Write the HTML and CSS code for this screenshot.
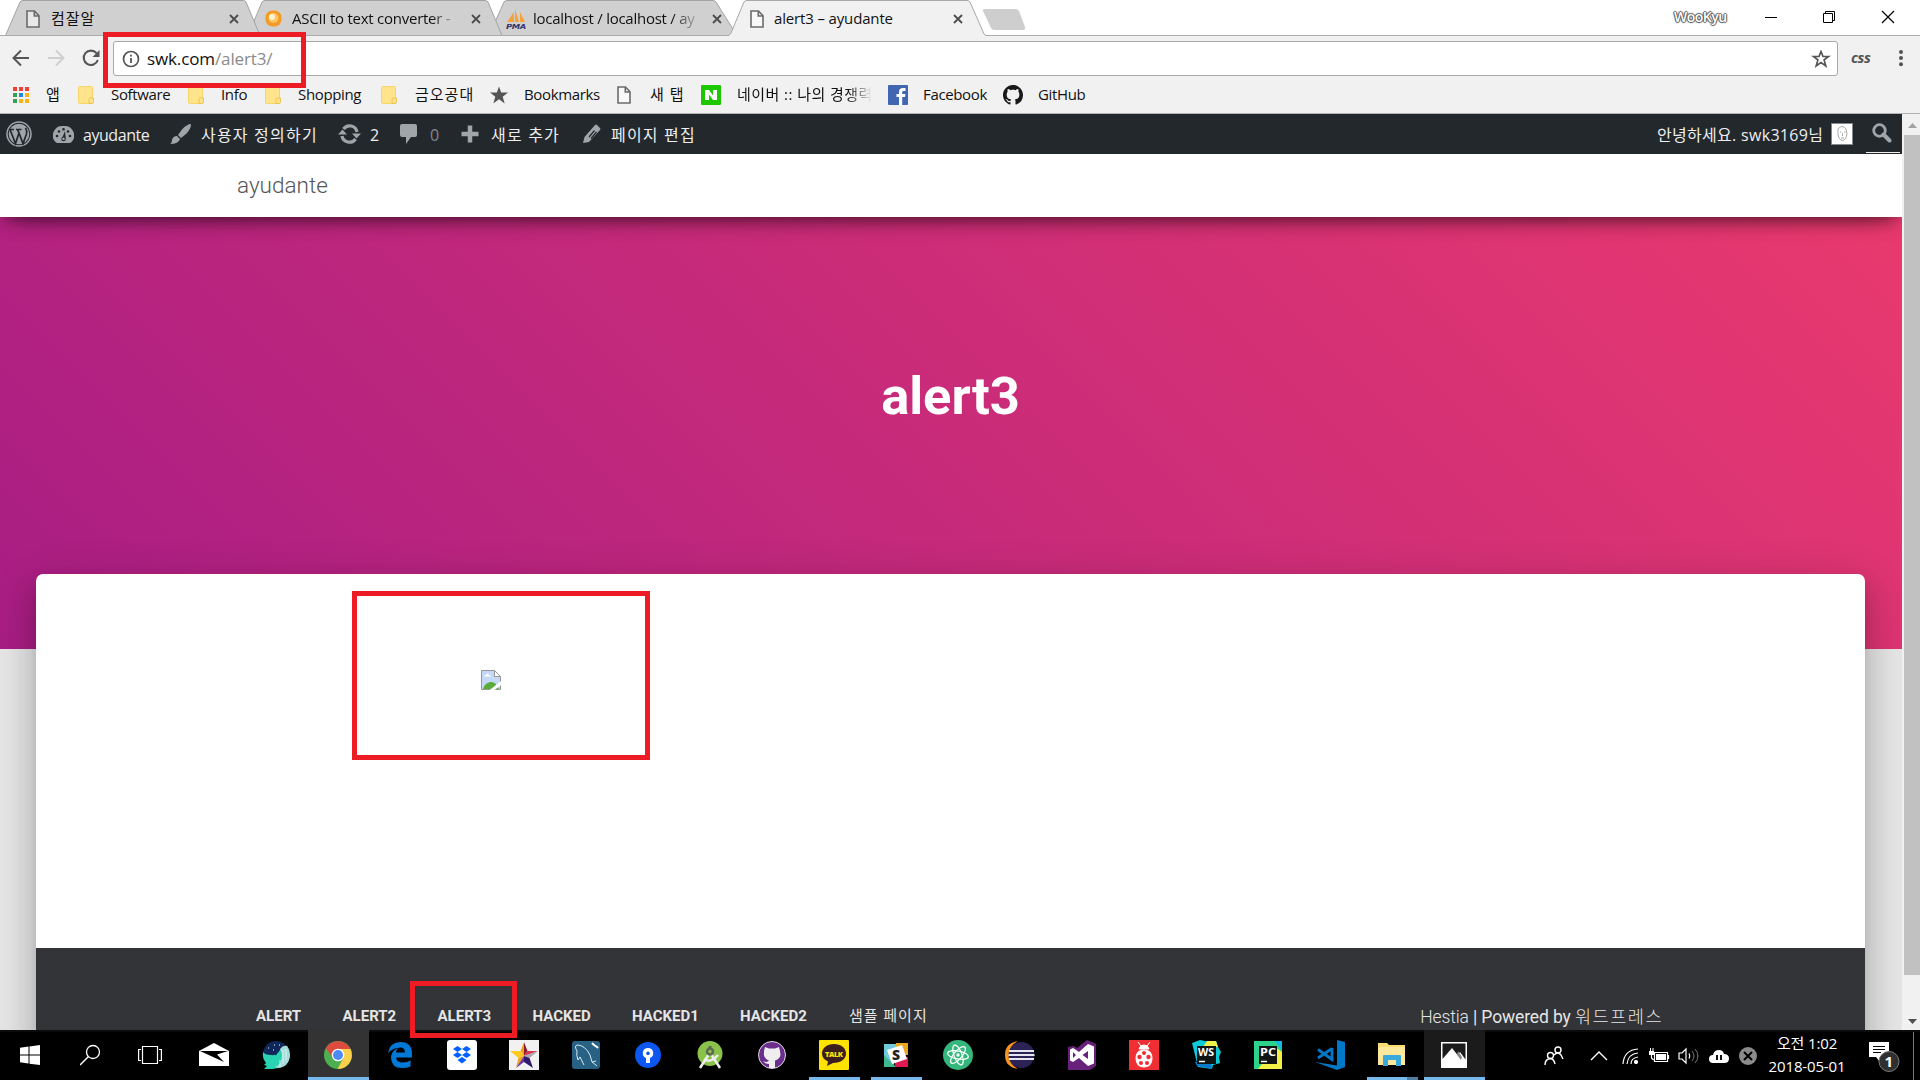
FILE: index.html
```html
<!DOCTYPE html>
<html lang="ko">
<head>
<meta charset="utf-8">
<title>alert3 – ayudante</title>
<link rel="stylesheet" href="styles.css">
</head>
<body>
<svg class="defs" width="0" height="0">
  <defs>
    <symbol id="page" viewBox="0 0 14 18"><path d="M1 1h7.500L13 5.700V17H1zM8.300 1v5H13" fill="#fff" fill-opacity=".5" stroke="#6b6b6b" stroke-width="1.600"/></symbol>
    <symbol id="close" viewBox="0 0 10 10"><path d="M1 1l8 8M9 1L1 9" stroke="#4c4c4c" stroke-width="1.800"/></symbol>
    <symbol id="folder" viewBox="0 0 16 18"><rect x=".5" y=".5" width="14" height="17" rx="1" fill="#ffe48c" stroke="#f7d56b"/><path d="M11 17.500v-4q0-1.500 1.500-1.500H15.500v4q0 1.500-1.500 1.500z" fill="#ffe48c" stroke="#e9bd40" stroke-width=".8"/></symbol>
    <symbol id="octocat" viewBox="0 0 16 16"><path fill-rule="evenodd" d="M8 0C3.580 0 0 3.580 0 8c0 3.540 2.290 6.530 5.470 7.590.4.070.55-.17.55-.38 0-.19-.01-.82-.01-1.490-2.010.37-2.530-.49-2.690-.94-.09-.23-.48-.94-.82-1.130-.28-.15-.68-.52-.01-.53.63-.01 1.080.58 1.230.82.72 1.210 1.870.87 2.330.66.07-.52.28-.87.51-1.070-1.780-.2-3.640-.89-3.640-3.950 0-.87.31-1.590.82-2.150-.08-.2-.36-1.020.08-2.120 0 0 .67-.21 2.200.82.64-.18 1.320-.27 2-.27s1.360.09 2 .27c1.530-1.040 2.200-.82 2.200-.82.44 1.100.16 1.920.08 2.120.51.56.82 1.270.82 2.150 0 3.070-1.870 3.750-3.650 3.950.29.25.54.73.54 1.480 0 1.070-.01 1.930-.01 2.200 0 .21.15.46.55.38A8.010 8.010 0 0 0 16 8c0-4.420-3.580-8-8-8z"/></symbol>
  </defs>
</svg>

<div class="screen">
  <header class="tabstrip">
    <svg class="tab-shapes" width="1920" height="36" viewBox="0 0 1920 36">
      <g fill="#d0d0d0" stroke="#a3a3a3">
        <path d="M489 35.500L504 2q1-1.500 3-1.500H713q2 0 3 1.500L737 35.500z"/>
        <path d="M248 35.500L262 2q1-1.500 3-1.500H485q2 0 3 1.500L502 35.500z"/>
        <path d="M5.500 35.500L20 2q1-1.500 3-1.500H243q2 0 3 1.500L260 35.500z"/>
      </g>
      <path d="M0 35.500H1920" stroke="#acacac"/>
      <path d="M728 36Q730 35 731 33L744 2q1-1.500 3-1.500H967q2 0 3 1.500L984 34q1 1.500 3 1.500V37H728z" fill="#f1f1f1"/>
      <path d="M728 35.500Q730 35 731 33L744 2q1-1.500 3-1.500H967q2 0 3 1.500L984 34q1 1.500 3 1.500" fill="none" stroke="#a8a8a8"/>
      <path d="M985 9h30q3 0 4 2l6 16q1 3-2 3H995q-3 0-4-2L983 11q-1-2 2-2z" fill="#cecece"/>
    </svg>
    <div class="tabs">
      <svg width="14" height="18"><use href="#page"/></svg><span class="ko">컴잘알</span><svg width="10" height="10"><use href="#close"/></svg>
      <svg width="17" height="18" viewBox="0 0 17 18"><rect x=".5" y=".5" width="16" height="16" rx="7" fill="#f49a25"/><circle cx="8.500" cy="8" r="5" fill="#ffc562"/><circle cx="7" cy="7" r="3" fill="#fff3d0"/></svg><span class="fade">ASCII to text converter -</span><svg width="10" height="10"><use href="#close"/></svg>
      <svg width="20" height="20" viewBox="0 0 20 20"><path d="M1 13L8 3v10zM9 13V0l4 13zM14 13V3l5 10z" fill="#f7a13c"/><text x="0" y="19.500" font-size="7" font-weight="700" font-style="italic" textLength="20" lengthAdjust="spacingAndGlyphs" fill="#34346d" font-family="DejaVu Sans">PMA</text></svg><span class="fade">localhost / localhost / ay</span><svg width="10" height="10"><use href="#close"/></svg>
      <svg width="14" height="18"><use href="#page"/></svg><span>alert3 – ayudante</span><svg width="10" height="10"><use href="#close"/></svg>
    </div>
    <div class="window-controls">
      <span class="profile">WooKyu</span>
      <svg width="14" height="14" viewBox="0 0 14 14"><path d="M1 7.500h12" stroke="#000"/></svg>
      <svg width="14" height="14" viewBox="0 0 14 14"><path d="M1.500 3.500h9v9h-9zM3.500 3.500v-2h9v9h-2" fill="none" stroke="#000"/></svg>
      <svg width="14" height="14" viewBox="0 0 14 14"><path d="M1 1l12 12M13 1L1 13" stroke="#000" stroke-width="1.200"/></svg>
    </div>
  </header>

  <div class="toolbar">
    <svg width="18" height="18" viewBox="0 0 18 18"><path d="M17 9H2M9 1.500L1.500 9 9 16.500" fill="none" stroke="#555" stroke-width="2"/></svg>
    <svg width="18" height="18" viewBox="0 0 18 18"><path d="M1 9h15M9 1.500L16.500 9 9 16.500" fill="none" stroke="#cfcfcf" stroke-width="2"/></svg>
    <svg width="18" height="18" viewBox="0 0 18 18"><path d="M14.500 4.200A7.200 7.200 0 1 0 15.800 11" fill="none" stroke="#555" stroke-width="2.100"/><path d="M17.500 1v7H10.500z" fill="#555"/></svg>
    <div class="omnibox">
      <svg width="18" height="18" viewBox="0 0 18 18"><circle cx="9" cy="9" r="7.500" fill="none" stroke="#555" stroke-width="1.700"/><path d="M9 8v5M9 4.700v1.800" stroke="#555" stroke-width="1.800"/></svg>
      <span class="url">swk.com<em>/alert3/</em></span>
      <svg width="20" height="18" viewBox="0 0 20 18"><path d="M10 1.500l2 5h5.500l-4.400 3.400 1.700 6L10 12.500l-4.800 3.400 1.700-6L2.500 6.500H8z" fill="none" stroke="#555" stroke-width="1.700"/></svg>
    </div>
    <span class="css-ext">css</span>
    <svg width="6" height="18" viewBox="0 0 6 18"><g fill="#555"><circle cx="3" cy="3" r="2"/><circle cx="3" cy="9" r="2"/><circle cx="3" cy="15.300" r="2"/></g></svg>
  </div>

  <nav class="bookmarks">
    <svg width="18" height="18" viewBox="0 0 18 18"><path d="M1 1h4v4H1zM7 1h4v4H7zM13 1h4v4h-4z" fill="#ef4136"/><path d="M1 7h4v4H1zM1 13h4v4H1z" fill="#32a350"/><path d="M7 7h4v4H7z" fill="#1e88e5"/><path d="M13 7h4v4h-4zM7 13h4v4H7zM13 13h4v4h-4z" fill="#fbb415"/></svg><span>앱</span>
    <svg width="16" height="18"><use href="#folder"/></svg><span>Software</span>
    <svg width="16" height="18"><use href="#folder"/></svg><span>Info</span>
    <svg width="16" height="18"><use href="#folder"/></svg><span>Shopping</span>
    <svg width="16" height="18"><use href="#folder"/></svg><span class="ko">금오공대</span>
    <svg width="18" height="18" viewBox="0 0 18 18"><path d="M9 .5l2.200 6H18l-5.300 4.200 2 6.800L9 13.300l-5.700 4.200 2-6.800L0 6.500h6.800z" fill="#555"/></svg><span>Bookmarks</span>
    <svg width="14" height="18"><use href="#page"/></svg><span class="ko">새 탭</span>
    <svg width="20" height="20" viewBox="0 0 20 20"><rect width="20" height="20" rx="1" fill="#1ec800"/><path d="M4 5h4l4 5.500V5h4v10h-4L8 9.500V15H4z" fill="#fff"/></svg><span class="fade ko naver">네이버 :: 나의 경쟁력</span>
    <svg width="20" height="20" viewBox="0 0 20 20"><rect width="20" height="20" rx="1" fill="#4267b2"/><path d="M11 20v-8H8.500V9H11V7q0-4 4-4h2.500v3H15.500Q14.200 6 14.200 7.300V9h3.200l-.4 3h-2.800v8z" fill="#fff"/></svg><span>Facebook</span>
    <svg width="20" height="20" fill="#191717"><use href="#octocat"/></svg><span>GitHub</span>
  </nav>

  <main class="viewport">
    <div class="page">
      <div class="adminbar">
        <svg width="26" height="26" viewBox="0 0 26 26" fill="none" stroke="#a0a5aa"><circle cx="13" cy="13" r="12" stroke-width="1.500"/><circle cx="13" cy="13" r="10.300" fill="#a0a5aa" stroke="none"/><path d="M4 8.500l5.500 14L13 12l4 10.500 3.500-9.500q1-3-1-6M3 8.500h5M10 8.500h5.500M11.500 8.500L13 12" stroke="#23282d" stroke-width="1.700"/></svg>
        <svg width="21" height="19" viewBox="0 0 21 19"><path d="M10.500 1A9.500 9.500 0 0 0 2.500 17q.8 1 2 1h12q1.200 0 2-1A9.500 9.500 0 0 0 10.500 1z" fill="#a0a5aa"/><g fill="#23282d"><circle cx="4" cy="11" r="1.300"/><circle cx="6" cy="6.500" r="1.300"/><circle cx="10.500" cy="4.300" r="1.300"/><circle cx="15" cy="6.500" r="1.300"/><circle cx="17" cy="11" r="1.300"/><path d="M12 6l.8 8q0 2.300-2.300 2.300T8.300 14q0-1.500 1.500-2.500zM10.500 12.500a1.300 1.300 0 1 0 .01 0z" fill-rule="evenodd"/></g></svg><span>ayudante</span>
        <svg width="23" height="22" viewBox="0 0 23 22"><path d="M22 1Q18 1 13 6.500L9 12l3 3 5-4Q22 6 22 1zM8 13l3 3Q9.500 21 1 21q2-1 2-4 1-4 5-4z" fill="#a0a5aa"/></svg><span class="ko">사용자 정의하기</span>
        <svg width="23" height="20" viewBox="0 0 23 20"><path d="M4 12A7.500 7.500 0 0 0 17.500 15M19 8A7.500 7.500 0 0 0 5.500 5" fill="none" stroke="#a0a5aa" stroke-width="3.300"/><path d="M0 10.500l4.500-5 4.500 5zM14 9.500l4.500 5 4.500-5z" fill="#a0a5aa"/></svg><span>2</span>
        <svg width="18" height="20" viewBox="0 0 18 20"><path d="M2 0h13q2 0 2 2v9q0 2-2 2h-4l-5 7v-7H2q-2 0-2-2V2q0-2 2-2z" fill="#a0a5aa"/></svg><span class="dim">0</span>
        <svg width="18" height="18" viewBox="0 0 18 18"><path d="M9 .5v17M.5 9h17" stroke="#a0a5aa" stroke-width="4.500"/></svg><span class="ko">새로 추가</span>
        <svg width="19" height="20" viewBox="0 0 19 20"><path d="M13 1q1-1 2 0l3 3q1 1 0 2L7 18 1 19l1.500-6z" fill="#a0a5aa"/><path d="M7 13L12.500 6.500M9 14.500l5.500-6.500" stroke="#23282d" stroke-width="1.200"/></svg><span class="ko">페이지 편집</span>
        <span class="hello">안녕하세요. swk3169님</span>
        <svg width="22" height="22" viewBox="0 0 22 22"><rect x=".5" y=".5" width="21" height="21" fill="#fff" stroke="#82878c"/><path d="M7 6q4-5 8 0l1 5q-1 6-4.500 6.500Q8 17 7 12zM9 9h1.500M13 9h1.500M11.500 10v3M10 15h3" fill="none" stroke="#aaa"/></svg>
        <div class="search"><svg width="20" height="20" viewBox="0 0 20 20"><circle cx="7.500" cy="7.500" r="5.800" fill="none" stroke="#a0a5aa" stroke-width="2.800"/><path d="M11.500 11.500l6 6" stroke="#a0a5aa" stroke-width="4" stroke-linecap="round"/></svg></div>
      </div>
      <div class="navbar"><a class="brand">ayudante</a></div>
      <section class="hero"><h1>alert3</h1></section>
      <article class="card">
        <div class="content">
          <svg width="20" height="20" viewBox="0 0 20 20"><path d="M.5.500h13l6 6v13H.5z" fill="#c5d8f8" stroke="#969696"/><path d="M13.500.500v6h6z" fill="#fff" stroke="#969696"/><path d="M3 6.500q0-1.500 2-1.500 1.500-3 3 0 2 0 2 1.500z" fill="#fff"/><path d="M2 19q2-6.500 7.500-7T18 19z" fill="#5aab37"/><path d="M8 20.500L20.500 10.500v4L13 20.500z" fill="#fff"/></svg>
        </div>
        <footer class="footer">
          <ul><li>ALERT</li><li>ALERT2</li><li>ALERT3</li><li>HACKED</li><li>HACKED1</li><li>HACKED2</li><li class="sample">샘플 페이지</li></ul>
          <p><a>Hestia</a> | Powered by <a class="wp">워드프레스</a></p>
        </footer>
      </article>
    </div>
    <div class="scrollbar">
      <svg width="16" height="21" viewBox="0 0 16 21"><path d="M4 14l4.500-5 4.500 5z" fill="#a3a3a3"/></svg>
      <div class="thumb"></div>
      <svg width="16" height="21" viewBox="0 0 16 21"><path d="M4 10l4.500 5L13 10z" fill="#505050"/></svg>
    </div>
  </main>

  <div class="taskbar">
    <div class="system">
      <svg width="20" height="20" viewBox="0 0 20 20"><path d="M0 2.800l8.500-1.200v8H0zM9.500 1.400L20 0v9.600H9.500zM0 10.500h8.500v8L0 17.300zM9.500 10.500H20V20L9.500 18.700z" fill="#fff"/></svg>
      <svg width="22" height="22" viewBox="0 0 22 22"><circle cx="13" cy="8" r="6.500" fill="none" stroke="#fff" stroke-width="1.300"/><path d="M8.500 12.500L0 21" stroke="#fff" stroke-width="1.500"/></svg>
      <svg width="24" height="20" viewBox="0 0 24 20"><path d="M4.500 1.500h15v17h-15zM3 4.500H.6v11H3M21 4.500h2.400v11H21" fill="none" stroke="#fff" stroke-width="1.200"/></svg>
    </div>
    <ul class="apps">
      <li><svg viewBox="0 0 30 30"><path d="M0 11L15 3l15 8v15H0zM1 11l24 11-7-7.500L29 11z" fill="#fff" fill-rule="evenodd"/></svg></li>
      <li><svg viewBox="0 0 30 30"><circle cx="15" cy="14" r="13" fill="#10275c"/><path d="M2 12q2 3 8 3 6 1 9-5 3-4 7-4 3 4 3 9-1 12-12 13l-5 1H3l3-3-3-1 2-2Q1 18 2 12z" fill="#27d3b0"/><path d="M19 9q3-4 7-3 3 4 3 9-1 12-12 13l-3-1q7-2 7-13z" fill="#a5d9da"/><path d="M22 10v14M25 9v12M19 20v7" stroke="#e8fafa" stroke-width=".8"/><circle cx="14.500" cy="14" r="1.200" fill="#10275c"/><path d="M7 8h1M13 5h1M18 5h1M12 10h1" stroke="#fff"/></svg></li>
      <li class="active"><svg viewBox="0 0 30 30"><circle cx="15" cy="15" r="14" fill="#4caf50"/><path d="M2.900 8A14 14 0 0 1 27.500 9H15L9.500 18z" fill="#dd4b3e"/><path d="M15 9h12.600Q31 18 25 24.700 20.500 29 14.500 29l6-11z" fill="#fdd04c"/><circle cx="15" cy="15" r="6.300" fill="#fff"/><circle cx="15" cy="15" r="5" fill="#4c8bf5"/></svg></li>
      <li><svg viewBox="0 0 30 30"><path d="M3 13Q5 2 15.500 2 27 2 27 14v3.500H11q.5 5 7 5 4 0 7.500-2v6Q22 28 17 28 6.500 28 6 18q0-7 7-10-5 0-10 5zM11 12.500h9q-.3-5-4.500-5-4 0-4.500 5z" fill="#0078d7" fill-rule="evenodd"/></svg></li>
      <li><svg viewBox="0 0 30 30"><rect width="30" height="30" rx="3" fill="#fff"/><path d="M10.500 6l4.500 3-4.500 3L6 9zM19.500 6L24 9l-4.500 3L15 9zM10.500 12l4.500 3-4.500 3L6 15zM19.500 12l4.500 3-4.500 3-4.500-3zM15 17l4.500 3-4.500 3.500-4.500-3.500z" fill="#0061ff"/></svg></li>
      <li><svg viewBox="0 0 30 30"><rect width="30" height="30" fill="#f1f1f1"/><path d="M15 2l3.500 9-3.500 5z" fill="#8a1d35"/><path d="M15 2l-3.500 9L15 16z" fill="#f3a11b"/><path d="M11.500 11H1l8.500 7L15 16z" fill="#ffc91f"/><path d="M9.500 18L7 28l8-12z" fill="#f3a11b"/><path d="M18.500 11H29L15 16z" fill="#e0304f"/><path d="M29 11l-8.500 7L15 16z" fill="#a8a8ad"/><path d="M15 16L7 28l8-6z" fill="#6c36a8"/><path d="M20.500 18L24 28l-9-6v-6z" fill="#31196b"/></svg></li>
      <li><svg viewBox="0 0 30 30"><rect x="1" y="1" width="28" height="28" rx="3" fill="#276184"/><path d="M7 20Q5 15 6 11 3 6 6 5q8 0 13 10l2 7 5 4M7 20l2-3 4 8M21 22l4-1" fill="none" stroke="#d9eaf2" stroke-width="1"/><path d="M21 3l2 2 3 2 1 1" fill="none" stroke="#fff" stroke-width="2"/></svg></li>
      <li><svg viewBox="0 0 30 30"><circle cx="15" cy="15" r="13" fill="#0b57f0"/><path d="M15 8a5.200 5.200 0 0 0-2 10v5h4v-5A5.200 5.200 0 0 0 15 8zm0 3.500a1.800 1.800 0 1 1-.01 0z" fill="#fff" fill-rule="evenodd"/></svg></li>
      <li><svg viewBox="0 0 30 30"><circle cx="15" cy="13.500" r="12.500" fill="#8bc34a"/><path d="M14 14L5 28M16 14l9 14M9 19q6 5 14-4" fill="none" stroke="#eee" stroke-width="2.500"/><path d="M15 6v3" stroke="#5c6b52" stroke-width="3"/><circle cx="15" cy="11.500" r="3" fill="none" stroke="#5c6b52" stroke-width="2.500"/></svg></li>
      <li><svg viewBox="0 0 30 30"><circle cx="15" cy="15" r="13.500" fill="#6b2d8e" stroke="#ddd"/><path d="M8 7l4 1.500h6L22 7l1 4q2 8-5 9.500V28h-6v-4q-4 0-6-3 4 2 6-.500-6-1.500-5-9.500z" fill="#eee"/></svg></li>
      <li class="open"><svg viewBox="0 0 30 30"><rect width="30" height="30" rx="1" fill="#ffe300"/><path d="M15 4c7 0 12 4 12 9.500S22 23 14 23l-6 3 1-4.500C5 20 3 17 3 13.500 3 8 8 4 15 4z" fill="#3c1e1e"/><text x="6" y="16.500" font-family="Open Sans" font-size="7.500" font-weight="800" textLength="18" fill="#ffe300">TALK</text></svg></li>
      <li class="open"><svg viewBox="0 0 30 30"><path d="M3 4h13v10l-4 13H3z" fill="#70cadb"/><path d="M15 3h12v12H15z" fill="#e9a820"/><path d="M3 15l12 12H3z" fill="#3eb991"/><path d="M14 17h13v10H14z" fill="#df1a53"/><path d="M6 10l15-5 5 14-15 5z" fill="#fff"/><text x="11" y="20" font-family="Open Sans" font-size="14" font-weight="800" fill="#222">S</text></svg></li>
      <li><svg viewBox="0 0 30 30"><circle cx="15" cy="15" r="15" fill="#34b77c"/><g fill="none" stroke="#fff" stroke-width="1.200"><ellipse cx="15" cy="15" rx="4" ry="10.500" transform="rotate(-20 15 15)"/><ellipse cx="15" cy="15" rx="4" ry="10.500" transform="rotate(40 15 15)"/><ellipse cx="15" cy="15" rx="4" ry="10.500" transform="rotate(100 15 15)"/></g><circle cx="15" cy="15" r="1.700" fill="#fff"/></svg></li>
      <li><svg viewBox="0 0 30 30"><path d="M13 1Q0 3 0 15t13 14Q4 24 4 15T13 1z" fill="#f7941e"/><circle cx="16.500" cy="15" r="13" fill="#2c2255"/><path d="M4 11h25M3.500 15h26M4 19h25" stroke="#e6e6f2" stroke-width="2"/></svg></li>
      <li><svg viewBox="0 0 30 30"><path d="M1 7l6-1 3 2L20 0l9 4v22l-6 4H1z" fill="#68217a"/><path d="M21 4l6 2.500v17L21 26l-9-8-6 4-3-1.500v-11L6 8l6 4zM21 11l-5.500 4 5.500 4zM6 12v6l3-3z" fill="#fff" fill-rule="evenodd"/></svg></li>
      <li><svg viewBox="0 0 30 30"><rect width="30" height="30" fill="#ef2f33"/><path d="M15 10q8 0 8 8 0 9-8 9t-8-9q0-8 8-8zM10 9q1-4 5-4t5 4zM9 2l3 4M21 2l-3 4" fill="#fff" stroke="#fff"/><g fill="#ef2f33"><circle cx="15" cy="13" r="2"/><circle cx="10.500" cy="17" r="2.200"/><circle cx="19.500" cy="17" r="2.200"/><circle cx="12" cy="23" r="2"/><circle cx="18" cy="23" r="2"/></g></svg></li>
      <li><svg viewBox="0 0 30 30"><path d="M1 3l8-3 10 2 6-1 2 6 3 5-2 5 1 6-7 2-1 4-14-2z" fill="#0ccbd8"/><path d="M16 1l9 0 2 6H12z" fill="#eff04a"/><path d="M4 22h16l1 7-15-3z" fill="#087cca"/><rect x="6" y="6" width="19" height="18" fill="#101514"/><text x="7" y="16" font-family="Open Sans" font-size="10.500" font-weight="700" textLength="16" lengthAdjust="spacingAndGlyphs" fill="#fff">WS</text><path d="M8 21.500h6" stroke="#fff" stroke-width="1.500"/></svg></li>
      <li><svg viewBox="0 0 30 30"><path d="M1 1h28v28H1z" fill="#2bd48a"/><path d="M22 1h7v10z" fill="#13b9e5"/><path d="M5 29l17-22 7 5v17z" fill="#f2ef45"/><rect x="6" y="6" width="18" height="18" fill="#101514"/><text x="7" y="16" font-family="Open Sans" font-size="11" font-weight="700" textLength="16" lengthAdjust="spacingAndGlyphs" fill="#fff">PC</text><path d="M8 21.500h6" stroke="#fff" stroke-width="1.500"/></svg></li>
      <li><svg viewBox="0 0 30 30"><path d="M22 0l8 2v25l-8 3L0 22l22 3.500z" fill="#0078c8"/><path d="M17 8v11.500L3 9.500M17 8.500L3 18" fill="none" stroke="#0078c8" stroke-width="2.800"/></svg></li>
      <li class="open stacked"><svg viewBox="0 0 30 30"><path d="M1 3h9l2 2h16v20H1z" fill="#fddc73"/><path d="M3 7h25v18H1V9z" fill="#ffe79b"/><path d="M6 26V16q0-1 1-1h16q1 0 1 1v10h-5v-6h-8v6z" fill="#39a9dc"/></svg></li>
      <li class="active photos"><svg viewBox="0 0 30 30"><path d="M2 2h26v26H2z" fill="#fff"/><path d="M3.500 3.500h23v16L21 12l-2.500 3L13 8 3.500 19z" fill="#1b1b1b"/><path d="M19 11l4 6-1 3-4-5z" fill="#888"/></svg></li>
    </ul>
    <div class="tray">
      <svg width="20" height="20" viewBox="0 0 20 20" fill="none" stroke="#fff" stroke-width="1.400"><circle cx="14" cy="4" r="3"/><circle cx="6.500" cy="9.500" r="3"/><path d="M1 19q0-6 5.500-6.500Q10 13 11 18M10 9q4-4 7 0l2 4"/></svg>
      <svg width="18" height="12" viewBox="0 0 18 12"><path d="M1 10l8-8 8 8" fill="none" stroke="#fff" stroke-width="1.400"/></svg>
      <svg width="18" height="18" viewBox="0 0 18 18" fill="none" stroke="#fff"><path d="M1 17Q2 3 16 2M5 17q1-10 11-11M9 17q0-6 7-7" stroke-width="1.200"/><circle cx="14" cy="15" r="1.700" fill="#fff"/></svg>
      <svg width="22" height="18" viewBox="0 0 22 18"><path d="M6.500 5.500h13v9h-13zM20.500 8v4M3.500 6v5l2 2" fill="none" stroke="#fff" stroke-width="1.200"/><path d="M8 7h10v6H8zM1 4h5v4H1zM2 1h1v3H2zM4.500 1h1v3h-1z" fill="#fff"/></svg>
      <svg width="22" height="18" viewBox="0 0 22 18" fill="none" stroke="#fff"><path d="M1 6h3l4-4v14l-4-4H1zM11 6.500q1.500 2.500 0 5" stroke-width="1.200"/><path d="M14 4q4 5 0 10M17 2q6 7 0 14" stroke="#777"/></svg>
      <svg width="22" height="18" viewBox="0 0 22 18"><path d="M5 16q-4 0-4-4t4-4q1-5 6-5 4 0 5 4 5 0 5 4.500T16 16z" fill="#fff"/><path d="M9 8v5M13 8v5" stroke="#111" stroke-width="2"/></svg>
      <svg width="18" height="18" viewBox="0 0 18 18"><circle cx="9" cy="9" r="9" fill="#8b8b8b"/><path d="M5 5l8 8M13 5l-8 8" stroke="#000" stroke-width="2"/></svg>
      <div class="clock"><span>오전 1:02</span><span>2018-05-01</span></div>
      <svg width="32" height="32" viewBox="0 0 32 32"><path d="M0 2h20v15h-9v5l-4-5H0z" fill="#fff"/><path d="M4 6.500h12M4 9.500h12M4 12.500h8" stroke="#000"/><circle cx="20" cy="21.500" r="10" fill="#303030" stroke="#777"/><text x="15.500" y="27" font-family="Open Sans" font-size="15" font-weight="700" fill="#fff">1</text></svg>
      <div class="peek"></div>
    </div>
  </div>

  <div class="mark mark-url"></div>
  <div class="mark mark-image"></div>
  <div class="mark mark-menu"></div>
</div>
</body>
</html>
```
FILE: styles.css
```css
* { box-sizing: border-box; }
body { margin: 0; overflow: hidden; font-family: "Open Sans", "Noto Sans CJK KR", sans-serif; }
ul, p, h1 { margin: 0; padding: 0; list-style: none; }
svg { display: block; }
.defs { position: absolute; }
.screen { position: relative; width: 1920px; height: 1080px; display: flex; flex-direction: column; background: #fff; overflow: hidden; }

/* browser window */
.tabstrip { position: relative; height: 36px; display: flex; justify-content: space-between; }
.tab-shapes { position: absolute; left: 0; top: 0; }
.tabs { position: relative; display: grid; align-items: center; height: 36px; padding: 2px 0 0 26px; font-size: 15px; letter-spacing: -.25px; color: #111; white-space: nowrap;
  grid-template-columns: 25px 178px 36px 27px 179px 35px 27px 179px 38px 24px 179px 20px; }
.tabs span { line-height: 20px; margin-bottom: 2px; overflow: hidden; }
.tabs .ko { letter-spacing: .9px; }
.tabs span:last-of-type { letter-spacing: -.15px; }
.fade { margin-right: 10px; overflow: hidden; -webkit-mask-image: linear-gradient(90deg, #000 82%, transparent); mask-image: linear-gradient(90deg, #000 82%, transparent); }
.window-controls { position: relative; display: grid; grid-template-columns: 90px 58px 59px 39px; align-items: center; height: 34px; }
.profile { margin-top: -2px; font-size: 14px; font-weight: 600; letter-spacing: -.5px; color: #fff; text-shadow: 1px 0 1px #555, -1px 0 1px #555, 0 1px 1px #555, 0 -1px 1px #555; }

.toolbar { height: 42px; padding: 2px 0 0 12px; display: grid; grid-template-columns: 35px 35px 31px 1738px 47px 12px; align-items: center; background: #f1f1f1; }
.omnibox { width: 1725px; height: 35px; margin-top: 1px; display: flex; align-items: center; padding: 0 6px 0 8px; background: #fff; border: 1px solid #a8a8a8; border-radius: 3px; }
.url { margin: -1px auto 0 7px; font-size: 17px; letter-spacing: -.12px; color: #111; }
.url em { font-style: normal; color: #8a8a8a; }
.css-ext { margin-top: -2px; font-size: 14.500px; font-weight: 700; font-style: italic; letter-spacing: -.4px; color: #555; }

.bookmarks { height: 36px; padding-left: 12px; display: grid; align-items: center; background: #f1f1f1; border-bottom: 1px solid #b3b3b3; font-size: 15px; letter-spacing: -.35px; color: #111; white-space: nowrap;
  grid-template-columns: 34px 32px 33px 77px 33px 44px 33px 83px 34px 75px 34px 93px 33px 51px 36px 151px 35px 80px 35px 60px; }
.bookmarks svg { margin-top: -1px; }
.bookmarks span { line-height: 20px; margin-bottom: 4px; }
.bookmarks .ko { letter-spacing: 1px; }
.bookmarks .naver { margin-right: 16px; letter-spacing: .45px; }

/* site */
.viewport { height: 916px; display: flex; background: #f1f1f1; }
.page { width: 1902px; background: #e5e5e5; overflow: hidden; display: flex; flex-direction: column; }
.adminbar { flex: none; position: relative; z-index: 3; height: 40px; padding-left: 6px; display: grid; align-items: center; background: #23282d; color: #eee; font-size: 16px; white-space: nowrap;
  grid-template-columns: 47px 30px 86px 32px 137px 32px 30px 30px 31px 30px 91px 29px 1046px 174px 35px 34px; }
.adminbar span { margin-top: 2px; letter-spacing: -.45px; line-height: 22px; }
.adminbar .ko { letter-spacing: 1.200px; }
.adminbar .hello { letter-spacing: .3px; }
.adminbar .dim { color: #82878c; }
.search { height: 37px; padding: 7px 0 0 6px; border-bottom: 1px solid #eee; }
.navbar { position: relative; z-index: 2; flex: none; height: 63px; padding: 0 237px 2px; display: flex; align-items: center; background: #fff;
  box-shadow: 0 12px 25px -15px rgba(0,0,0,.56), 0 4px 25px 0 rgba(0,0,0,.12), 0 10px 12px -6px rgba(0,0,0,.25); }
.brand { font: 300 22.500px Roboto, sans-serif; color: #555; }
.hero { flex: none; height: 495px; margin-top: -63px; padding: 62px 1px 74px 0; display: flex; align-items: center; justify-content: center; background: linear-gradient(45deg, #a81d84 0%, #eb3a6e 100%); }
.hero h1 { font: 700 52.500px/60px Roboto, sans-serif; color: #fff; }
.card { position: relative; flex: none; margin: -75px 37px 0 36px; height: 520px; background: #fff; border-radius: 7px;
  box-shadow: 0 20px 30px 2px rgba(0,0,0,.14), 0 8px 38px 6px rgba(0,0,0,.12), 0 10px 12px -6px rgba(0,0,0,.2); }
.content { height: 374px; padding: 96px 0 0 445px; }
.footer { height: 146px; padding: 56px 203px 0 220px; display: flex; justify-content: space-between; background: #323437; color: #e5e5e5; font: 700 15px/24px Roboto, "Noto Sans CJK KR", sans-serif; white-space: nowrap; }
.footer ul { display: grid; grid-template-columns: 86.500px 95px 95px 99.500px 108px 109px 90px; }
.footer .sample { font-weight: 400; letter-spacing: 1px; }
.footer p { margin-top: 1px; font-size: 17.500px; font-weight: 400; letter-spacing: -.12px; }
.footer a { font-weight: 300; }
.footer .wp { letter-spacing: 1.500px; margin-right: -1px; }
.scrollbar { width: 18px; padding: 0 0 0 2px; display: flex; flex-direction: column; background: #f1f1f1; }
.thumb { height: 840px; margin-bottom: auto; background: #c1c1c1; }

/* desktop */
.taskbar { height: 50px; display: flex; background: #000; border-top: 2px solid #0b0b0b; color: #fff; }
.system { width: 183px; padding: 0 0 2px 20px; display: grid; grid-template-columns: 60px 58px 40px; align-items: center; }
.apps { display: flex; }
.apps li { width: 62px; height: 48px; padding: 8px 16px 0; position: relative; }
.apps svg { width: 30px; height: 30px; }
.apps .active { height: 50px; margin-top: -2px; padding-top: 10px; background: linear-gradient(#333, #333) 1px 0 / 61px 50px no-repeat; }
.apps .photos { background-image: linear-gradient(#1b1b1b, #1b1b1b); }
.apps .active::after, .apps .open::after { content: ""; position: absolute; left: 6px; bottom: 0; width: 51px; height: 3px; background: #76b9ed; }
.apps .active::after { left: 1px; width: 61px; }
.apps .stacked::after { background: linear-gradient(90deg, #76b9ed 40px, #4f7da3 40px); }
.tray { margin-left: 59px; padding-bottom: 2px; display: grid; align-items: center; grid-template-columns: 46px 32px 26px 30px 30px 31px 31px 74px 24px 45px 6px; }
.clock { margin-top: -3px; display: flex; flex-direction: column; align-items: center; font-size: 15px; line-height: 23px; letter-spacing: -.15px; white-space: nowrap; }
.tray .clock + svg { margin-left: 25px; }
.peek { grid-column: 11; width: 1px; height: 48px; background: #777; }

/* highlight rectangles */
.mark { position: absolute; border: 5px solid #ed1c24; }
.mark-url { left: 103px; top: 32px; width: 203px; height: 56px; }
.mark-image { left: 352px; top: 591px; width: 298px; height: 169px; }
.mark-menu { left: 410px; top: 981px; width: 107px; height: 57px; }
```
